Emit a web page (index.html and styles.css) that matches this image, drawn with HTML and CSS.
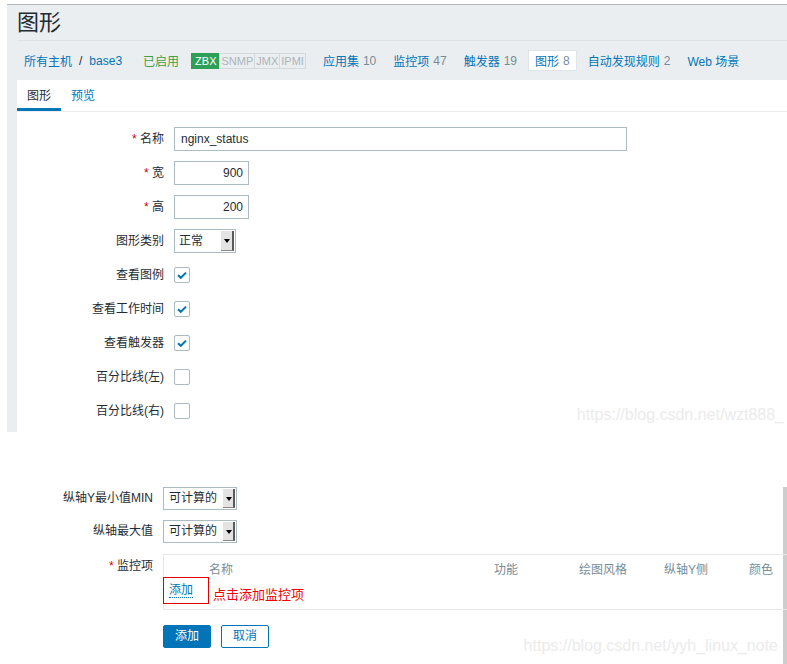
FILE: index.html
```html
<!DOCTYPE html>
<html lang="zh">
<head>
<meta charset="utf-8">
<title>图形</title>
<link rel="stylesheet" href="styles.css">
</head>
<body>
<section class="shot1">
  <h1 class="title">图形</h1>
  <nav class="nav">
    <a class="crumb">所有主机</a><span class="sep">/</span><a class="crumb mono">base3</a>
    <span class="status">已启用</span>
    <span class="badges"><span class="badge on">ZBX</span><span class="badge">SNMP</span><span class="badge">JMX</span><span class="badge">IPMI</span></span>
    <span class="navitems">
      <a class="navitem">应用集<span class="cnt">10</span></a>
      <a class="navitem">监控项<span class="cnt">47</span></a>
      <a class="navitem">触发器<span class="cnt">19</span></a>
      <a class="navitem active">图形<span class="cnt">8</span></a>
      <a class="navitem">自动发现规则<span class="cnt">2</span></a>
      <a class="navitem">Web 场景</a>
    </span>
  </nav>
  <div class="panel">
    <div class="tabs">
      <span class="tab active">图形</span>
      <span class="tab">预览</span>
    </div>
    <div class="form">
      <label class="lbl"><span class="req">*</span> 名称</label>
      <div class="ctl"><span class="input wide">nginx_status</span></div>
      <label class="lbl"><span class="req">*</span> 宽</label>
      <div class="ctl"><span class="input num">900</span></div>
      <label class="lbl"><span class="req">*</span> 高</label>
      <div class="ctl"><span class="input num">200</span></div>
      <label class="lbl">图形类别</label>
      <div class="ctl"><span class="select s1"><span class="sv">正常</span><span class="arrow"></span></span></div>
      <label class="lbl">查看图例</label>
      <div class="ctl"><span class="cb checked"><svg viewBox="0 0 16 16" width="16" height="16"><path d="M4 8.2 L6.8 10.8 L12 5.6" fill="none" stroke="#0275b8" stroke-width="2"/></svg></span></div>
      <label class="lbl">查看工作时间</label>
      <div class="ctl"><span class="cb checked"><svg viewBox="0 0 16 16" width="16" height="16"><path d="M4 8.2 L6.8 10.8 L12 5.6" fill="none" stroke="#0275b8" stroke-width="2"/></svg></span></div>
      <label class="lbl">查看触发器</label>
      <div class="ctl"><span class="cb checked"><svg viewBox="0 0 16 16" width="16" height="16"><path d="M4 8.2 L6.8 10.8 L12 5.6" fill="none" stroke="#0275b8" stroke-width="2"/></svg></span></div>
      <label class="lbl">百分比线(左)</label>
      <div class="ctl"><span class="cb"></span></div>
      <label class="lbl">百分比线(右)</label>
      <div class="ctl"><span class="cb"></span></div>
    </div>
  </div>
  <div class="wm wm1">https://blog.csdn.net/wzt888_</div>
</section>

<section class="shot2">
  <div class="form2">
    <label class="lbl2">纵轴Y最小值MIN</label>
    <div class="ctl2"><span class="select s2"><span class="sv">可计算的</span><span class="arrow"></span></span></div>
    <label class="lbl2">纵轴最大值</label>
    <div class="ctl2"><span class="select s2"><span class="sv">可计算的</span><span class="arrow"></span></span></div>
    <label class="lbl2 top"><span class="req">*</span> 监控项</label>
    <div class="items">
      <div class="ihead">
        <span class="hc c0"></span>
        <span class="hc c1">名称</span>
        <span class="hc c2">功能</span>
        <span class="hc c3">绘图风格</span>
        <span class="hc c4">纵轴Y侧</span>
        <span class="hc c5">颜色</span>
      </div>
      <div class="irow">
        <span class="redbox"><a class="addlink">添加</a></span>
        <span class="note">点击添加监控项</span>
      </div>
    </div>
    <span class="empty"></span>
    <div class="buttons">
      <span class="btn primary">添加</span>
      <span class="btn">取消</span>
    </div>
  </div>
  <div class="wm wm2">https://blog.csdn.net/yyh_linux_note</div>
</section>
</body>
</html>
```

FILE: styles.css
```css
* { box-sizing: border-box; }
html, body { margin: 0; padding: 0; background: #fff; }
body {
  font-family: "Liberation Sans", Arial, "Noto Sans CJK SC", sans-serif;
  font-size: 12px;
  color: #1f2c33;
  width: 787px;
  overflow: hidden;
}
a { color: #0275b8; text-decoration: none; }

.shot1 {
  position: relative;
  margin: 4px 0 0 7px;
  border-top: 1px solid #b3b7ba;
  background: #ebeef0;
  height: 428px;
  padding-left: 10px;
  display: flex;
  flex-direction: column;
}
.title {
  margin: 0;
  height: 36px;
  line-height: 35px;
  font-size: 22px;
  font-weight: normal;
  color: #1f2c33;
  border-bottom: 1px solid #dde2e5;
}
.nav {
  height: 39px;
  display: flex;
  align-items: center;
  padding-left: 7px;
}
.crumb { color: #0275b8; }
.sep { margin: 0 7px 0 7px; color: #1f2c33; }
.status { color: #429e47; margin-left: 21px; }
.badges { display: flex; margin-left: 12px; }
.badge {
  height: 16px;
  line-height: 14px;
  font-size: 11px;
  padding: 0 1px;
  border: 1px solid #d3d9dc;
  color: #aab5bb;
  margin-left: -1px;
}
.badge.on { background: #2f9f58; border-color: #2f9f58; color: #fff; padding: 0 3px; margin-left: 0; }
.navitems { display: flex; gap: 5px; margin-left: 11px; }
.navitem {
  display: flex;
  align-items: center;
  height: 21px;
  padding: 0 6px;
  color: #0275b8;
}
.navitem.active { background: #fff; border: 1px solid #dfe4e7; padding: 0 6px; }
.cnt { color: #768d99; margin-left: 4px; }

.panel {
  flex: 1;
  background: #fff;
  margin-top: 0;
  display: flex;
  flex-direction: column;
}
.tabs {
  display: flex;
  height: 32px;
  border-bottom: 1px solid #ebeef0;
}
.tab {
  padding: 0 10px;
  line-height: 28px;
  height: 31px;
  color: #0275b8;
  border-bottom: 3px solid transparent;
  padding-top: 2px;
}
.tab.active { color: #1f2c33; border-bottom-color: #0275b8; }

.form {
  display: grid;
  grid-template-columns: 147px 1fr;
  column-gap: 10px;
  row-gap: 10px;
  padding-top: 15px;
  grid-auto-rows: 24px;
}
.lbl {
  text-align: right;
  line-height: 24px;
  white-space: nowrap;
}
.req { color: #d40000; }
.ctl { display: flex; align-items: center; }
.input {
  display: block;
  height: 24px;
  line-height: 22px;
  border: 1px solid #acbbc2;
  padding: 0 6px;
  background: #fff;
}
.input.wide { width: 453px; }
.input.num { width: 75px; text-align: right; padding-right: 5px; }
.select {
  display: flex;
  height: 24px;
  border: 1px solid #acbbc2;
  background: #fff;
}
.select.s1 { width: 62px; }
.select .sv { flex: 1; line-height: 22px; padding-left: 4px; }
.select .arrow {
  width: 13px;
  margin: 1px 1px 1px 0;
  background: #e3e3e3;
  border-right: 2px solid #5a5a5a;
  border-bottom: 1px solid #8a8a8a;
  position: relative;
}
.select .arrow::after {
  content: "";
  position: absolute;
  left: 3px;
  top: 8px;
  border-left: 3px solid transparent;
  border-right: 3px solid transparent;
  border-top: 4px solid #000;
}
.cb {
  display: block;
  width: 16px;
  height: 16px;
  border: 1px solid #acbbc2;
  border-radius: 2px;
  background: #fff;
  position: relative;
}
.cb svg { position: absolute; left: -1px; top: -1px; }

.wm {
  position: absolute;
  font-family: "Liberation Sans", Arial, sans-serif;
  font-size: 16px;
  color: #ebebeb;
  white-space: nowrap;
}
.wm1 { right: 3px; top: 401px; }

.shot2 {
  position: relative;
  margin-top: 55px;
  height: 190px;
  border-right: 4px solid #cdcdcd;
}
.form2 {
  display: grid;
  grid-template-columns: 153px 624px;
  column-gap: 10px;
}
.lbl2 {
  text-align: right;
  line-height: 23px;
  white-space: nowrap;
}
.lbl2.top { line-height: 24px; }
.ctl2 { height: 23px; margin-bottom: 10px; }
.select.s2 { width: 74px; height: 23px; }
.select.s2 .sv { line-height: 21px; padding-left: 5px; }
.select.s2 .arrow { width: 12px; }
.form2 .ctl2:nth-of-type(2) { margin-bottom: 11px; }

.items {
  border: 1px solid #e4e8ea;
  border-right: none;
  height: 56px;
}
.ihead {
  display: flex;
  height: 22px;
  padding-top: 7px;
  line-height: 16px;
  color: #768d99;
}
.hc.c0 { width: 45px; }
.hc.c1 { width: 285px; }
.hc.c2, .hc.c3, .hc.c4 { width: 85px; }
.irow {
  display: flex;
  align-items: center;
  height: 27px;
}
.redbox {
  display: block;
  width: 46px;
  height: 27px;
  margin-left: -1px;
  border: 1px solid #e00000;
  padding: 5px 0 0 5px;
}
.addlink {
  display: inline-block;
  line-height: 14px;
  border-bottom: 1px dotted #0275b8;
}
.note {
  margin-left: 4px;
  font-size: 13px;
  color: #f00000;
  padding-top: 6px;
}
.buttons {
  display: flex;
  gap: 10px;
  margin-top: 15px;
}
.btn {
  display: block;
  width: 48px;
  height: 23px;
  line-height: 21px;
  text-align: center;
  border: 1px solid #0275b8;
  color: #0275b8;
  background: #fff;
  border-radius: 2px;
}
.btn.primary { background: #0275b8; color: #fff; }
.wm2 { right: 5px; top: 150px; }
```
